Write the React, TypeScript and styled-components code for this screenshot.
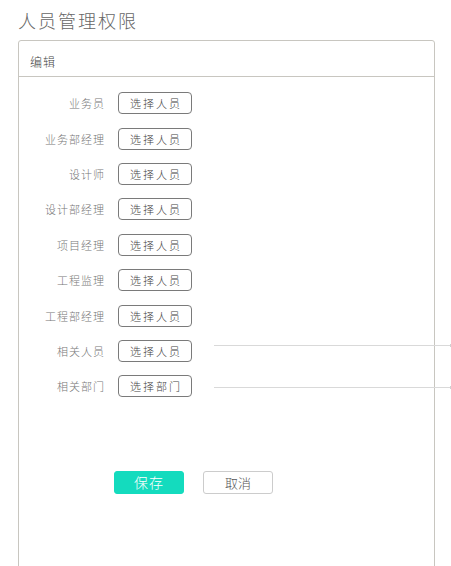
import React from 'react'
import styled, { createGlobalStyle } from 'styled-components'

const GlobalStyle = createGlobalStyle`
  html, body {
    margin: 0;
    padding: 0;
    overflow: hidden;
    background: #fff;
  }
  body {
    font-family: 'Noto Sans CJK SC', 'Noto Sans', sans-serif;
    font-weight: 300;
    color: #333;
  }
`

const Page = styled.div`
  padding: 8px 0 0 18px;
`

const Title = styled.h1`
  margin: 0 0 8px;
  height: 24px;
  line-height: 24px;
  font-size: 18px;
  font-weight: 300;
  letter-spacing: 2px;
  color: #666;
`

const Panel = styled.section`
  box-sizing: border-box;
  width: 417px;
  min-height: 530px;
  border: 1px solid #c8c6c0;
  border-radius: 3px;
`

const PanelHeader = styled.div`
  box-sizing: border-box;
  height: 36px;
  padding: 6px 0 0 11px;
  display: flex;
  align-items: center;
  border-bottom: 1px solid #c8c6c0;
  font-size: 12px;
  letter-spacing: 1px;
  color: #444;
`

const Form = styled.div`
  padding-top: 8.6px;
  display: flex;
  flex-direction: column;
`

const Row = styled.div`
  height: 35.375px;
  display: flex;
  align-items: center;
`

const Label = styled.span`
  flex: 0 0 86px;
  margin-right: 13px;
  text-align: right;
  font-size: 11px;
  letter-spacing: 1px;
  color: #777;
`

const PickButton = styled.button`
  box-sizing: border-box;
  flex: 0 0 74px;
  height: 22px;
  padding: 0 0 0 2px;
  border: 1px solid #7a7a7a;
  border-radius: 4px;
  background: #fff;
  font-family: inherit;
  font-weight: 300;
  font-size: 11px;
  letter-spacing: 2px;
  color: #444;
  line-height: 20px;
`

const Rule = styled.div<{ $top: number }>`
  position: relative;
  flex: 0 0 237px;
  align-self: flex-start;
  height: 1px;
  margin: ${p => p.$top}px 0 0 22px;
  background: #d9d9d9;

  &::after {
    content: '';
    position: absolute;
    right: 0;
    top: -1px;
    width: 1px;
    height: 3px;
    background: #d0d0d0;
  }
`

const Actions = styled.div`
  margin: 67px 0 0 95px;
  display: flex;
  gap: 19px;
`

const ActionButton = styled.button<{ $primary?: boolean }>`
  box-sizing: border-box;
  width: 70px;
  height: 23px;
  padding: 0;
  border-radius: 3px;
  border: 1px solid ${p => (p.$primary ? '#14dbbe' : '#cccccc')};
  background: ${p => (p.$primary ? '#14dbbe' : '#fff')};
  color: ${p => (p.$primary ? '#fff' : '#555')};
  font-family: inherit;
  font-weight: 300;
  font-size: ${p => (p.$primary ? 14 : 13)}px;
  letter-spacing: ${p => (p.$primary ? 1 : 0)}px;
  line-height: 21px;
`

type FieldType = {
  label: string
  action: string
  rule?: number
}

const FIELDS: FieldType[] = [
  { label: '业务员', action: '选择人员' },
  { label: '业务部经理', action: '选择人员' },
  { label: '设计师', action: '选择人员' },
  { label: '设计部经理', action: '选择人员' },
  { label: '项目经理', action: '选择人员' },
  { label: '工程监理', action: '选择人员' },
  { label: '工程部经理', action: '选择人员' },
  { label: '相关人员', action: '选择人员', rule: 11.7 },
  { label: '相关部门', action: '选择部门', rule: 18.7 },
]

export default function App() {
  return (
    <Page>
      <GlobalStyle />
      <Title>人员管理权限</Title>
      <Panel>
        <PanelHeader>编辑</PanelHeader>
        <Form>
          {FIELDS.map(field => (
            <Row key={field.label}>
              <Label>{field.label}</Label>
              <PickButton>{field.action}</PickButton>
              {field.rule !== undefined && <Rule $top={field.rule} />}
            </Row>
          ))}
        </Form>
        <Actions>
          <ActionButton $primary>保存</ActionButton>
          <ActionButton>取消</ActionButton>
        </Actions>
      </Panel>
    </Page>
  )
}
